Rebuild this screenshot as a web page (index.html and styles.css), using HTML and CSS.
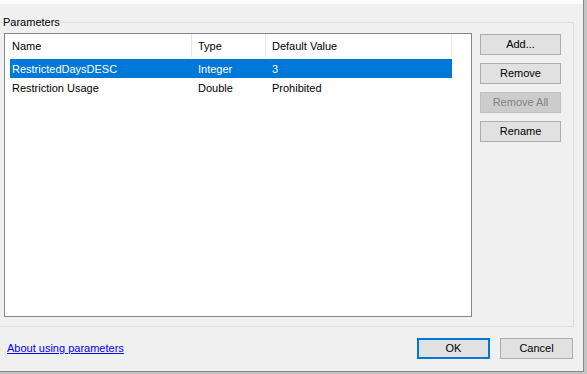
FILE: index.html
```html
<!DOCTYPE html>
<html>
<head>
<meta charset="utf-8">
<link rel="stylesheet" href="styles.css">
</head>
<body>
<div class="window">
  <div class="topstrip"></div>
  <fieldset class="group">
    <legend class="group-title">Parameters</legend>
    <div class="group-body">
      <div class="listview">
        <div class="lv-header">
          <div class="lv-hcell c1">Name</div>
          <div class="lv-hcell c2">Type</div>
          <div class="lv-hcell c3">Default Value</div>
        </div>
        <div class="lv-rows">
          <div class="lv-row selected">
            <div class="lv-cell r1">RestrictedDaysDESC</div>
            <div class="lv-cell r2">Integer</div>
            <div class="lv-cell r3">3</div>
          </div>
          <div class="lv-row">
            <div class="lv-cell r1">Restriction Usage</div>
            <div class="lv-cell r2">Double</div>
            <div class="lv-cell r3">Prohibited</div>
          </div>
        </div>
      </div>
      <div class="side-buttons">
        <button class="btn side">Add...</button>
        <button class="btn side">Remove</button>
        <button class="btn side" disabled>Remove All</button>
        <button class="btn side">Rename</button>
      </div>
    </div>
  </fieldset>
  <div class="footer">
    <a class="help-link" href="#">About using parameters</a>
    <div class="footer-buttons">
      <button class="btn dlg default">OK</button>
      <button class="btn dlg">Cancel</button>
    </div>
  </div>
</div>
</body>
</html>
```

FILE: styles.css
```css
html, body {
  margin: 0;
  padding: 0;
}
body {
  background: #c4c4c4;
  width: 587px;
  height: 374px;
  overflow: hidden;
  font-family: "Liberation Sans", Arial, sans-serif;
  font-size: 11px;
  color: #000;
}
.window {
  width: 583px;
  height: 371px;
  background: #f0f0f0;
  border-right: 1px solid #888888;
  border-bottom: 1px solid #888888;
  display: flex;
  flex-direction: column;
}
.topstrip {
  height: 4px;
  background: #fbfbfb;
  flex: none;
}
.group {
  margin: 10px 9px 0 -1px;
  padding: 3px 11px 9px 4px;
  border: 1px solid #dcdcdc;
  min-inline-size: 0;
  flex: none;
}
.group-title {
  padding: 0 1px 0 0;
  margin-left: -1px;
  line-height: 16px;
  font-size: 11px;
}
.group-body {
  display: flex;
  gap: 8px;
}
.listview {
  width: 466px;
  height: 282px;
  border: 1px solid #828790;
  background: #fff;
}
.lv-header {
  display: flex;
  height: 23px;
  line-height: 24px;
}
.lv-hcell {
  border-right: 1px solid #e5e5e5;
  box-sizing: border-box;
  padding-left: 6px;
  white-space: nowrap;
}
.lv-hcell.c1 { width: 187px; padding-left: 7px; }
.lv-hcell.c2 { width: 74px; }
.lv-hcell.c3 { width: 186px; }
.lv-rows {
  padding: 2px 0 0 5px;
}
.lv-row {
  display: flex;
  width: 442px;
  height: 19px;
  line-height: 20px;
  white-space: nowrap;
}
.lv-row.selected {
  background: #0078d7;
  color: #fff;
}
.lv-cell { box-sizing: border-box; }
.lv-cell.r1 { width: 188px; padding-left: 2px; }
.lv-cell.r2 { width: 74px; }
.lv-cell.r3 { flex: 1; }
.side-buttons {
  display: flex;
  flex-direction: column;
  gap: 8px;
  padding-top: 1px;
}
.btn {
  font-family: inherit;
  font-size: 11px;
  color: #000;
  background: #e1e1e1;
  border: 1px solid #adadad;
  border-radius: 0;
  padding: 0;
  margin: 0;
  height: 21px;
  line-height: 19px;
  box-sizing: border-box;
  text-align: center;
}
.btn.side { width: 81px; }
.btn:disabled {
  background: #cccccc;
  border-color: #bfbfbf;
  color: #838383;
}
.footer {
  flex: 1;
  display: flex;
  align-items: flex-start;
  justify-content: space-between;
  padding: 11px 10px 0 7px;
}
.help-link {
  color: #0000ff;
  text-decoration: underline;
  line-height: 19px;
  margin-top: 1px;
}
.footer-buttons {
  display: flex;
  gap: 10px;
}
.btn.dlg { width: 73px; }
.btn.default {
  border: 2px solid #0078d7;
  line-height: 17px;
}
```
